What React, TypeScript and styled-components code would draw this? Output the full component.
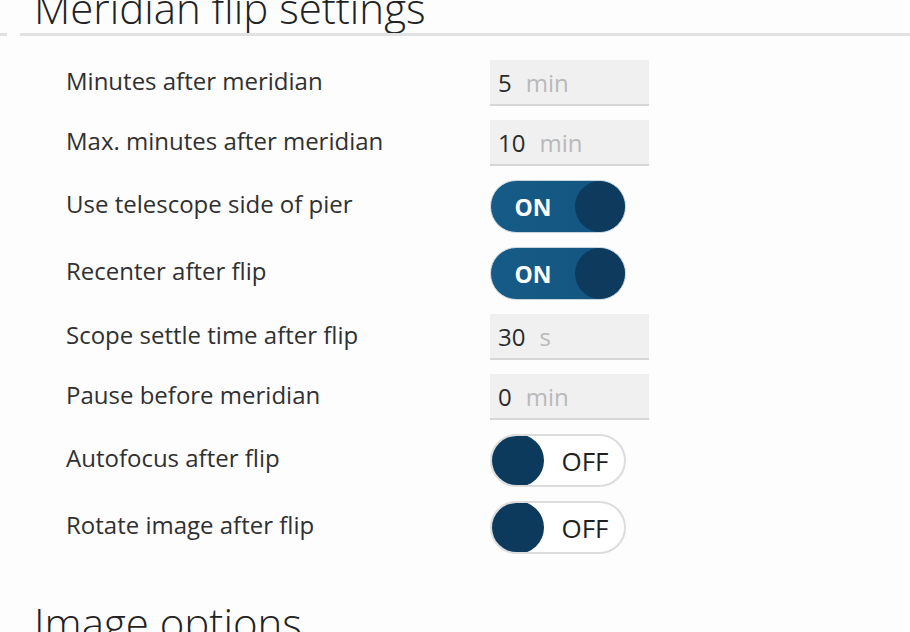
import React from "react";
import styled, { createGlobalStyle } from "styled-components";

const GlobalStyle = createGlobalStyle`
	html, body {
		margin: 0;
		padding: 0;
		background: #fdfdfd;
		overflow: hidden;
	}
	body {
		font-family: "Open Sans", "Noto Sans", sans-serif;
		color: #2b2b2b;
	}
`;

const Page = styled.div`
	width: 910px;
	height: 632px;
	overflow: hidden;
`;

const SectionHeading = styled.h2`
	margin: 0;
	padding-left: 34px;
	font-size: 42px;
	font-weight: 300;
	line-height: 44px;
	color: #222;
	white-space: nowrap;
`;

const TopHeading = styled(SectionHeading)`
	margin-top: -14px;
`;

const Rule = styled.div`
	display: flex;
	gap: 13px;
	height: 3px;
	margin-top: 3px;

	&::before {
		content: "";
		width: 7px;
		background: #e2e2e2;
	}
	&::after {
		content: "";
		flex: 1;
		background: #e2e2e2;
	}
`;

const SettingsList = styled.div`
	display: grid;
	grid-template-columns: 424px auto;
	row-gap: 14px;
	padding: 24px 0 0 66px;
	align-items: center;
`;

const Label = styled.div`
	font-size: 24px;
	color: #303030;
	line-height: 30px;
	margin-top: -5px;
`;

const NumberBox = styled.div`
	width: 159px;
	height: 46px;
	box-sizing: border-box;
	background: #f0f0f0;
	border-bottom: 2px solid #d6d6d6;
	display: flex;
	align-items: center;
	gap: 14px;
	padding-left: 8px;
	font-size: 24px;
`;

const Value = styled.span`
	color: #2b2b2b;
`;

const Unit = styled.span`
	color: #b9b9b9;
`;

const Toggle = styled.div<{ $on: boolean }>`
	width: 136px;
	height: 53px;
	box-sizing: border-box;
	border-radius: 27px;
	display: flex;
	flex-direction: ${(p) => (p.$on ? "row" : "row-reverse")};
	align-items: center;
	border: ${(p) => (p.$on ? "1px solid #c9d3da" : "2px solid #dcdcdc")};
	background: ${(p) =>
		p.$on ? "linear-gradient(90deg, #165b87, #145480)" : "#ffffff"};
	overflow: hidden;
`;

const ToggleText = styled.span<{ $on: boolean }>`
	flex: 1;
	text-align: center;
	font-size: ${(p) => (p.$on ? "23px" : "26px")};
	font-weight: ${(p) => (p.$on ? 700 : 500)};
	color: ${(p) => (p.$on ? "#ffffff" : "#1f1f1f")};
	padding-left: ${(p) => (p.$on ? "0" : "2px")};
`;

const Thumb = styled.span<{ $on: boolean }>`
	width: ${(p) => (p.$on ? "50px" : "54px")};
	height: ${(p) => (p.$on ? "51px" : "53px")};
	border-radius: 50%;
	background: ${(p) => (p.$on ? "#0e3b5d" : "#0c3a5c")};
	flex-shrink: 0;
	margin: ${(p) => (p.$on ? "0" : "-2px 0 -2px -2px")};
`;

type Setting =
	| { label: string; kind: "number"; value: string; unit: string }
	| { label: string; kind: "toggle"; on: boolean };

const settings: Setting[] = [
	{ label: "Minutes after meridian", kind: "number", value: "5", unit: "min" },
	{ label: "Max. minutes after meridian", kind: "number", value: "10", unit: "min" },
	{ label: "Use telescope side of pier", kind: "toggle", on: true },
	{ label: "Recenter after flip", kind: "toggle", on: true },
	{ label: "Scope settle time after flip", kind: "number", value: "30", unit: "s" },
	{ label: "Pause before meridian", kind: "number", value: "0", unit: "min" },
	{ label: "Autofocus after flip", kind: "toggle", on: false },
	{ label: "Rotate image after flip", kind: "toggle", on: false },
];

const Switch: React.FC<{ on: boolean }> = ({ on }) => (
	<Toggle $on={on}>
		<ToggleText $on={on}>{on ? "ON" : "OFF"}</ToggleText>
		<Thumb $on={on} />
	</Toggle>
);

const BottomHeading = styled(SectionHeading)`
	margin-top: 47px;
`;

export default function App() {
	return (
		<Page>
			<GlobalStyle />
			<TopHeading>Meridian flip settings</TopHeading>
			<Rule />
			<SettingsList>
				{settings.map((s) => (
					<React.Fragment key={s.label}>
						<Label>{s.label}</Label>
						{s.kind === "number" ? (
							<NumberBox>
								<Value>{s.value}</Value>
								<Unit>{s.unit}</Unit>
							</NumberBox>
						) : (
							<Switch on={s.on} />
						)}
					</React.Fragment>
				))}
			</SettingsList>
			<BottomHeading>Image options</BottomHeading>
		</Page>
	);
}
